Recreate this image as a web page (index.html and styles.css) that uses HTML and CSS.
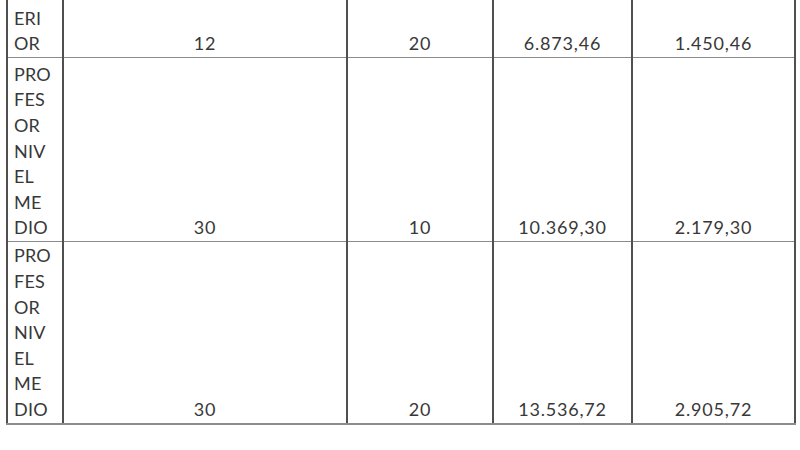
FILE: index.html
```html
<!DOCTYPE html>
<html lang="pt">
<head>
<meta charset="utf-8">
<title>Tabela</title>
<link rel="stylesheet" href="styles.css">
</head>
<body>
<table class="grid">
  <colgroup>
    <col class="c1"><col class="c2"><col class="c3"><col class="c4"><col class="c5">
  </colgroup>
  <tr class="r1">
    <td class="cargo">SUP<br>ERI<br>OR</td>
    <td>12</td>
    <td>20</td>
    <td>6.873,46</td>
    <td>1.450,46</td>
  </tr>
  <tr class="r2">
    <td class="cargo">PRO<br>FES<br>OR<br>NIV<br>EL<br>ME<br>DIO</td>
    <td>30</td>
    <td>10</td>
    <td>10.369,30</td>
    <td>2.179,30</td>
  </tr>
  <tr class="r3">
    <td class="cargo">PRO<br>FES<br>OR<br>NIV<br>EL<br>ME<br>DIO</td>
    <td>30</td>
    <td>20</td>
    <td>13.536,72</td>
    <td>2.905,72</td>
  </tr>
</table>
</body>
</html>
```

FILE: styles.css
```css
html, body {
  margin: 0;
  padding: 0;
  background: #ffffff;
}

body {
  font-family: Lato, "Liberation Sans", sans-serif;
  font-size: 18px;
  color: #383838;
  overflow: hidden;
  height: 450px;
}

.grid {
  border-collapse: collapse;
  table-layout: fixed;
  margin-top: -22px;
  margin-left: 6px;
  width: 788px;
}

.c1 { width: 56px; }
.c2 { width: 284px; }
.c3 { width: 146px; }
.c4 { width: 139px; }
.c5 { width: 163px; }

.grid td {
  padding: 0;
  line-height: 25.6px;
  vertical-align: bottom;
  text-align: center;
  border-left: 2px solid #505050;
  border-right: 2px solid #505050;
  border-top: 1px solid #8c8c8c;
  border-bottom: 1px solid #8c8c8c;
  letter-spacing: 0.8px;
}

.grid td.cargo {
  text-align: left;
  padding-left: 6px;
  letter-spacing: 0.2px;
}

.r1 { height: 79px; }
.r2 { height: 184px; }
.r3 { height: 182px; }
.r3 td { border-bottom: 2px solid #8c8c8c; }
```
